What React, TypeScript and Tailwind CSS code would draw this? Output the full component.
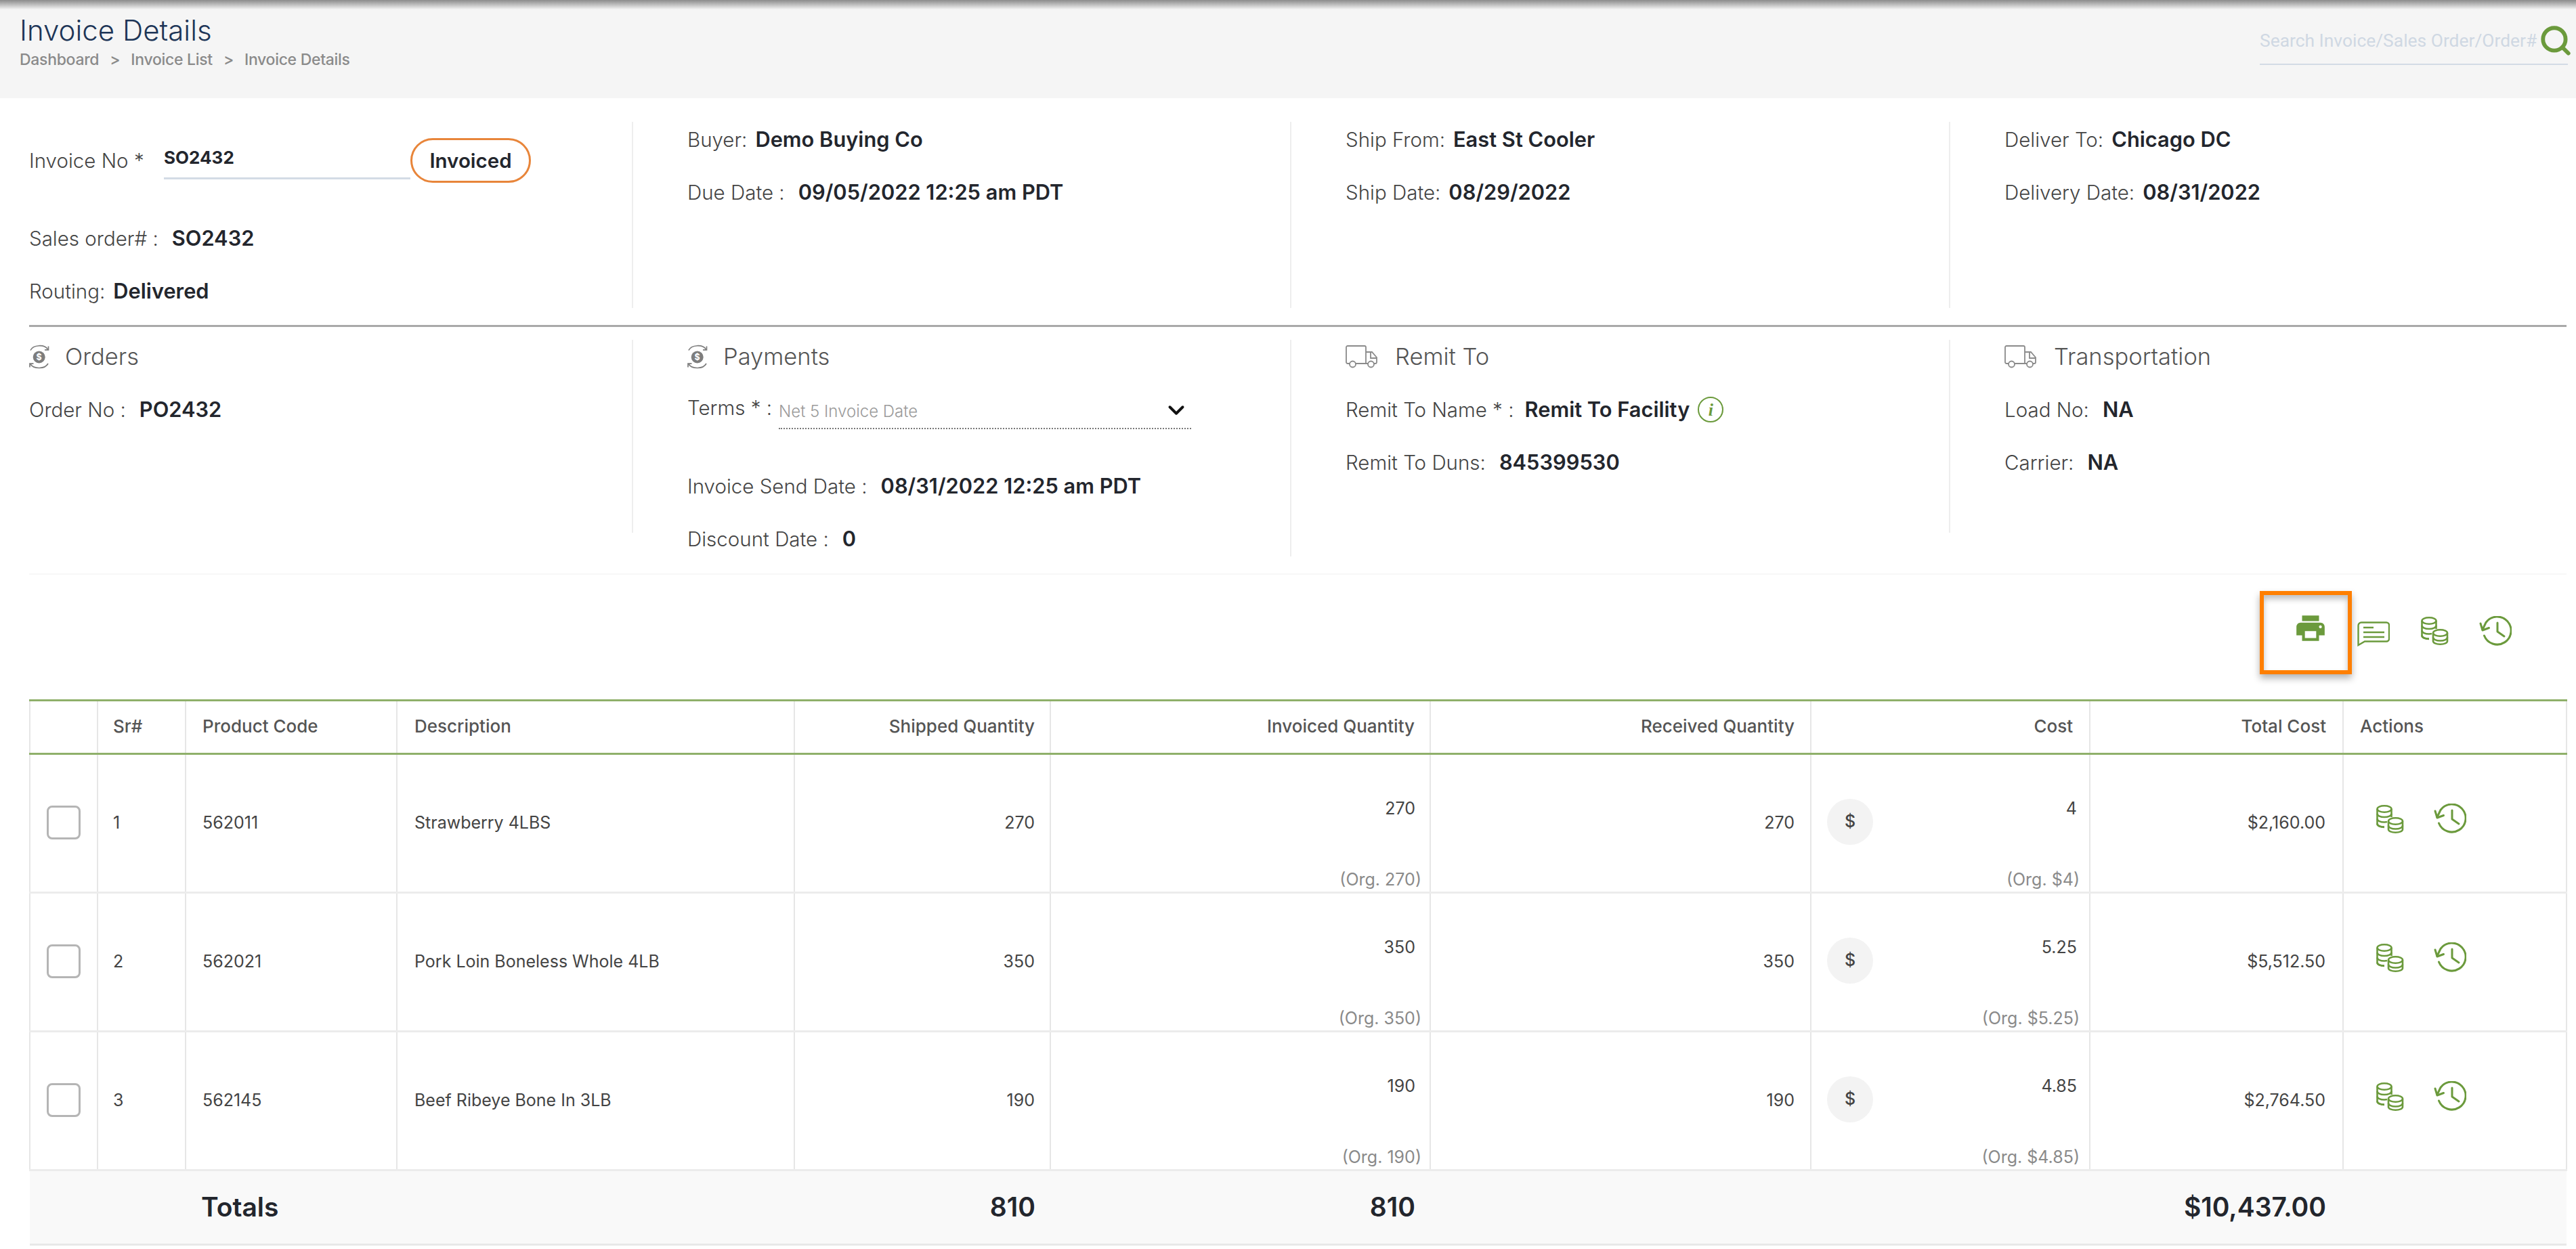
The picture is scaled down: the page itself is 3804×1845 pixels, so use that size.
import React from "react";
import { ChevronDown, Search } from "lucide-react";
import { MdPrint } from "react-icons/md";

const rows = [
  { sr: 1, code: "562011", desc: "Strawberry 4LBS", shipped: 270, invoiced: 270, received: 270, cost: "4", total: "$2,160.00" },
  { sr: 2, code: "562021", desc: "Pork Loin Boneless Whole 4LB", shipped: 350, invoiced: 350, received: 350, cost: "5.25", total: "$5,512.50" },
  { sr: 3, code: "562145", desc: "Beef Ribeye Bone In 3LB", shipped: 190, invoiced: 190, received: 190, cost: "4.85", total: "$2,764.50" },
];

function CoinsIcon({ className }: { className?: string }) {
  return (
    <svg viewBox="0 0 41 42" fill="none" stroke="#6b9a3c" strokeWidth="2.600" className={className}>
      <path d="M1.500 6v22c0 3 4.500 5 10.500 5M22.500 6v12" />
      <ellipse cx="12" cy="6" rx="10.500" ry="4.700" fill="#fff" />
      <path d="M1.500 13c0 2.800 4.500 5 10.500 5s10.500-2.200 10.500-5M1.500 20.500c0 2.800 4.500 5 10.500 5 1.500 0 3-.1 4-.4M1.500 27.500c0 2.800 4.500 5 10.500 5" />
      <path d="M18 24v12c0 2.800 4.500 4.700 10.500 4.700S39 38.800 39 36V24" fill="#fff" />
      <ellipse cx="28.500" cy="24" rx="10.500" ry="4.700" fill="#fff" />
      <path d="M18 30.500c0 2.800 4.500 5 10.500 5S39 33.300 39 30.500" />
    </svg>
  );
}

function HistoryIcon({ className }: { className?: string }) {
  return (
    <svg viewBox="0 0 48 46" fill="none" stroke="#6b9a3c" strokeWidth="3" strokeLinecap="round" strokeLinejoin="round" className={className}>
      <path d="M7.500 29A20.500 20.500 0 1 0 10 9.500L5 20" />
      <path d="M2 11l3 10 9.500-3.500" />
      <path d="M27 10v13l10 7" />
    </svg>
  );
}

function ChatIcon({ className }: { className?: string }) {
  return (
    <svg viewBox="0 0 48 37" fill="none" stroke="#6b9a3c" strokeWidth="2.400" className={className}>
      <path d="M6 1.500h37a4 4 0 0 1 4 4v20a4 4 0 0 1-4 4H11L1.500 35V6a4.500 4.500 0 0 1 4.500-4.500z" />
      <path d="M9 9h15M9 16h31M9 23h31" />
    </svg>
  );
}

function OrdersIcon() {
  return (
    <svg viewBox="0 0 30 38" className="w-[30px] h-[38px]" fill="none">
      <circle cx="14.700" cy="19.500" r="9" fill="#7d7d7d" />
      <text x="14.700" y="24" textAnchor="middle" fontSize="12.500" fontWeight="700" fill="#fff" fontFamily="Inter, sans-serif">$</text>
      <path d="M2 9.500C6 1 23 0.500 27.500 8M28 29C23.500 37.500 7 37.500 2 30" stroke="#7d7d7d" strokeWidth="1.700" />
      <path d="M28.500 3.500V8.800H23M1 34.500V29.200H6.500" stroke="#7d7d7d" strokeWidth="1.700" />
    </svg>
  );
}

function TruckIcon() {
  return (
    <svg viewBox="0 0 48 34" className="w-[48px] h-[34px]" fill="none" stroke="#8a8a8a" strokeWidth="1.800">
      <path d="M6 27H3a2 2 0 0 1-2-2V3a2 2 0 0 1 2-2h25a2 2 0 0 1 2 2v24H15" />
      <path d="M30 10h9l7 8v7a2 2 0 0 1-2 2h-2M33 27h-3M37 10v9h9" />
      <circle cx="10.500" cy="28" r="4.500" />
      <circle cx="37.500" cy="28" r="4.500" />
    </svg>
  );
}

function Field({ label, value, wide, className }: { label: string; value: string; wide?: boolean; className?: string }) {
  return (
    <div className={`flex items-center h-[38px] whitespace-nowrap ${className ?? ""}`}>
      <span className="font-light text-[#444]">{label}</span>
      <span className={`${wide ? "ml-[20px]" : "ml-[12px]"} text-[30.8px] font-semibold text-[#23262d]`}>{value}</span>
    </div>
  );
}

function SectionHead({ icon, title, iconWidth }: { icon: React.ReactNode; title: string; iconWidth: string }) {
  return (
    <div className="flex items-center h-[50px] text-[34.5px] font-light text-[#555]">
      <span className={`${iconWidth} shrink-0`}>{icon}</span>
      {title}
    </div>
  );
}

export default function App() {
  return (
    <div className="w-[3804px] h-[1845px] bg-white overflow-hidden font-[Inter,sans-serif] text-[29.5px] text-[#333]">
      <header className="h-[145px] bg-[#f5f5f5]">
        <div className="h-[14px] bg-gradient-to-b from-[#8c8c8c] to-[#f5f5f5]" />
        <div className="flex justify-between pl-[29px] pr-[12px]">
          <div>
            <h1 className="mt-[8px] text-[42px] leading-[46px] font-light text-[#1d3557]">Invoice Details</h1>
            <div className="mt-[9px] flex items-center text-[23px] leading-[22px] font-medium text-[#8a8a8a] tracking-[-0.3px]">
              <span>Dashboard</span>
              <span className="mx-[16px]">&gt;</span>
              <span>Invoice List</span>
              <span className="mx-[16px]">&gt;</span>
              <span>Invoice Details</span>
            </div>
          </div>
          <div className="mt-[22px] w-[455px] h-[60px] border-b-2 border-[#d3dbe5] flex items-start">
            <span className="mt-[8px] font-[Roboto,sans-serif] text-[26.4px] leading-[32px] text-[#cfd8e3] whitespace-nowrap">
              Search Invoice/Sales Order/Order#
            </span>
            <Search className="w-[50px] h-[50px] -mt-[1px] ml-[3px] text-[#6b9a3c] shrink-0" strokeWidth={2.8} />
          </div>
        </div>
      </header>

      <div className="pl-[43px] pr-[14px]">
        <section className="pt-[35px] pb-[25px] border-b-[3px] border-[#a9a9a9] grid grid-cols-[892px_972px_973px_1fr]">
          <div className="h-[275px] border-r-2 border-[#eeeeee] pt-[24px]">
            <div className="flex items-center h-[66px]">
              <span className="font-light text-[#444] w-[199px] whitespace-nowrap">Invoice No *</span>
              <div className="w-[364px] h-[61px] border-b-[3px] border-[#d3dbe5] text-[26px] font-bold text-[#23262d] pt-[9px] self-start">SO2432</div>
              <div className="w-[178px] h-[66px] rounded-[33px] border-[3px] border-[#e8853a] flex items-center justify-center font-semibold text-[#23262d]">Invoiced</div>
            </div>
            <Field label="Sales order# :" value="SO2432" wide className="mt-[63px]" />
            <Field label="Routing:" value="Delivered" className="mt-[40px]" />
          </div>
          <div className="h-[275px] border-r-2 border-[#eeeeee] pl-[80px] pt-[7px] flex flex-col gap-[40px]">
            <Field label="Buyer:" value="Demo Buying Co" />
            <Field label="Due Date :" value="09/05/2022 12:25 am PDT" wide />
          </div>
          <div className="h-[275px] border-r-2 border-[#eeeeee] pl-[80px] pt-[7px] flex flex-col gap-[40px]">
            <Field label="Ship From:" value="East St Cooler" />
            <Field label="Ship Date:" value="08/29/2022" />
          </div>
          <div className="h-[275px] pl-[80px] pt-[7px] flex flex-col gap-[40px]">
            <Field label="Deliver To:" value="Chicago DC" />
            <Field label="Delivery Date:" value="08/31/2022" />
          </div>
        </section>

        <section className="pt-[19px] h-[366px] border-b-2 border-[#f7f7f7] grid grid-cols-[892px_972px_973px_1fr] items-start">
          <div className="h-[285px] border-r-2 border-[#eeeeee]">
            <SectionHead icon={<OrdersIcon />} iconWidth="w-[53px]" title="Orders" />
            <Field label="Order No :" value="PO2432" wide className="mt-[34px]" />
          </div>
          <div className="h-[320px] border-r-2 border-[#eeeeee] pl-[80px]">
            <SectionHead icon={<OrdersIcon />} iconWidth="w-[53px]" title="Payments" />
            <div className="mt-[31px] flex items-start">
              <span className="h-[38px] leading-[38px] font-light text-[#444] w-[135px] whitespace-nowrap">Terms * :</span>
              <div className="w-[609px] h-[51px] border-b-2 border-dotted border-[#777] flex justify-between items-start pt-[11px] text-[24px] leading-[28px] font-light text-[#9a9a9a]">
                Net 5 Invoice Date
                <ChevronDown className="w-[38px] h-[38px] text-[#111] mr-[3px] -mt-[7px]" strokeWidth={2.5} />
              </div>
            </div>
            <Field label="Invoice Send Date :" value="08/31/2022 12:25 am PDT" wide className="mt-[65px]" />
            <Field label="Discount Date :" value="0" wide className="mt-[40px]" />
          </div>
          <div className="h-[285px] border-r-2 border-[#eeeeee] pl-[80px]">
            <SectionHead icon={<TruckIcon />} iconWidth="w-[73px]" title="Remit To" />
            <div className="mt-[34px] flex items-center h-[38px] whitespace-nowrap">
              <span className="font-light text-[#444]">Remit To Name * :</span>
              <span className="ml-[16px] text-[30.8px] font-semibold text-[#23262d]">Remit To Facility</span>
              <span className="ml-[12px] w-[38px] h-[38px] rounded-full border-2 border-[#6b9a3c] flex items-center justify-center text-[#6b9a3c] text-[26px] italic font-[Liberation_Serif,serif] font-bold">i</span>
            </div>
            <Field label="Remit To Duns:" value="845399530" wide className="mt-[40px]" />
          </div>
          <div className="h-[285px] pl-[80px]">
            <SectionHead icon={<TruckIcon />} iconWidth="w-[73px]" title="Transportation" />
            <Field label="Load No:" value="NA" wide className="mt-[34px]" />
            <Field label="Carrier:" value="NA" wide className="mt-[40px]" />
          </div>
        </section>

        <div className="h-[184px] pt-[24px] pr-[81px] flex justify-end items-start">
          <button className="w-[136px] h-[123px] border-[6px] border-[#ff7f00] shadow-[0_6px_10px_rgba(0,0,0,0.3),inset_0_6px_8px_rgba(0,0,0,0.25)] flex items-start justify-center pl-[14px] pt-[8px]">
            <MdPrint className="w-[50px] h-[50px] text-[#6b9a3c] mt-[16px]" />
          </button>
          <ChatIcon className="w-[48px] h-[37px] ml-[8px] mt-[45px]" />
          <CoinsIcon className="w-[41px] h-[42px] ml-[46px] mt-[38px]" />
          <HistoryIcon className="w-[48px] h-[46px] ml-[45px] mt-[37px]" />
        </div>

        <table className="w-[3746px] table-fixed border-collapse text-[25px] text-[#444]">
          <colgroup>
            <col className="w-[100px]" />
            <col className="w-[130px]" />
            <col className="w-[312px]" />
            <col className="w-[587px]" />
            <col className="w-[378px]" />
            <col className="w-[561px]" />
            <col className="w-[562px]" />
            <col className="w-[412px]" />
            <col className="w-[374px]" />
            <col className="w-[330px]" />
          </colgroup>
          <thead>
            <tr className="h-[79px] border-y-[3px] border-[#8fb06a] text-[26px] font-medium text-[#555]">
              <th className="border-x-2 border-[#e6e6e6]"></th>
              <th className="border-x-2 border-[#e6e6e6] pl-[22px] pb-[3px] text-left font-medium">Sr#</th>
              <th className="border-x-2 border-[#e6e6e6] pl-[24px] pb-[3px] text-left font-medium">Product Code</th>
              <th className="border-x-2 border-[#e6e6e6] pl-[25px] pb-[3px] text-left font-medium">Description</th>
              <th className="border-x-2 border-[#e6e6e6] pr-[22px] pb-[3px] text-right font-medium">Shipped Quantity</th>
              <th className="border-x-2 border-[#e6e6e6] pr-[22px] pb-[3px] text-right font-medium">Invoiced Quantity</th>
              <th className="border-x-2 border-[#e6e6e6] pr-[23px] pb-[3px] text-right font-medium">Received Quantity</th>
              <th className="border-x-2 border-[#e6e6e6] pr-[24px] pb-[3px] text-right font-medium">Cost</th>
              <th className="border-x-2 border-[#e6e6e6] pr-[24px] pb-[3px] text-right font-medium">Total Cost</th>
              <th className="border-x-2 border-[#e6e6e6] pl-[24px] pb-[3px] text-left font-medium">Actions</th>
            </tr>
          </thead>
          <tbody>
            {rows.map((r) => (
              <tr key={r.sr} className="h-[205px] border-b-[3px] border-[#ececec]">
                <td className="border-x-2 border-[#e6e6e6]">
                  <div className="mx-auto w-[50px] h-[50px] rounded-[8px] border-[3px] border-[#b5b5b5] -mt-[2px]" />
                </td>
                <td className="border-x-2 border-[#e6e6e6] pl-[22px]">{r.sr}</td>
                <td className="border-x-2 border-[#e6e6e6] pl-[24px]">{r.code}</td>
                <td className="border-x-2 border-[#e6e6e6] pl-[25px]">{r.desc}</td>
                <td className="border-x-2 border-[#e6e6e6] pr-[22px] text-right">{r.shipped}</td>
                <td className="border-x-2 border-[#e6e6e6] pt-[56px] pr-[12px] text-right">
                  <div className="pr-[9px] pb-[73px]">{r.invoiced}</div>
                  <div className="text-[#8a8a8a] leading-[26px]">(Org. {r.invoiced})</div>
                </td>
                <td className="border-x-2 border-[#e6e6e6] pr-[23px] text-right">{r.received}</td>
                <td className="border-x-2 border-[#e6e6e6] pt-[56px] pl-[23px] pr-[14px]">
                  <div className="flex items-start justify-between">
                    <span className="mt-[4px] w-[68px] h-[68px] rounded-full bg-[#f3f3f3] flex items-center justify-center font-medium">$</span>
                    <div className="text-right">
                      <div className="pr-[4px] pb-[73px]">{r.cost}</div>
                      <div className="text-[#8a8a8a] leading-[26px]">(Org. ${r.cost})</div>
                    </div>
                  </div>
                </td>
                <td className="border-x-2 border-[#e6e6e6] pr-[25px] text-right">{r.total}</td>
                <td className="border-x-2 border-[#e6e6e6] pl-[48px]">
                  <div className="flex items-center -mt-[12px]">
                    <CoinsIcon className="w-[41px] h-[42px]" />
                    <HistoryIcon className="w-[48px] h-[46px] ml-[44px]" />
                  </div>
                </td>
              </tr>
            ))}
          </tbody>
          <tfoot>
            <tr className="h-[110px] bg-[#f9f9f9] border-b-[3px] border-[#e8e8e8] text-[39px] font-semibold text-[#23262d]">
              <td colSpan={2}></td>
              <td className="pl-[23px]" colSpan={2}>Totals</td>
              <td className="pr-[22px] text-right">810</td>
              <td className="pr-[22px] text-right">810</td>
              <td></td>
              <td></td>
              <td className="pr-[25px] text-right">$10,437.00</td>
              <td></td>
            </tr>
          </tfoot>
        </table>
      </div>
    </div>
  );
}
